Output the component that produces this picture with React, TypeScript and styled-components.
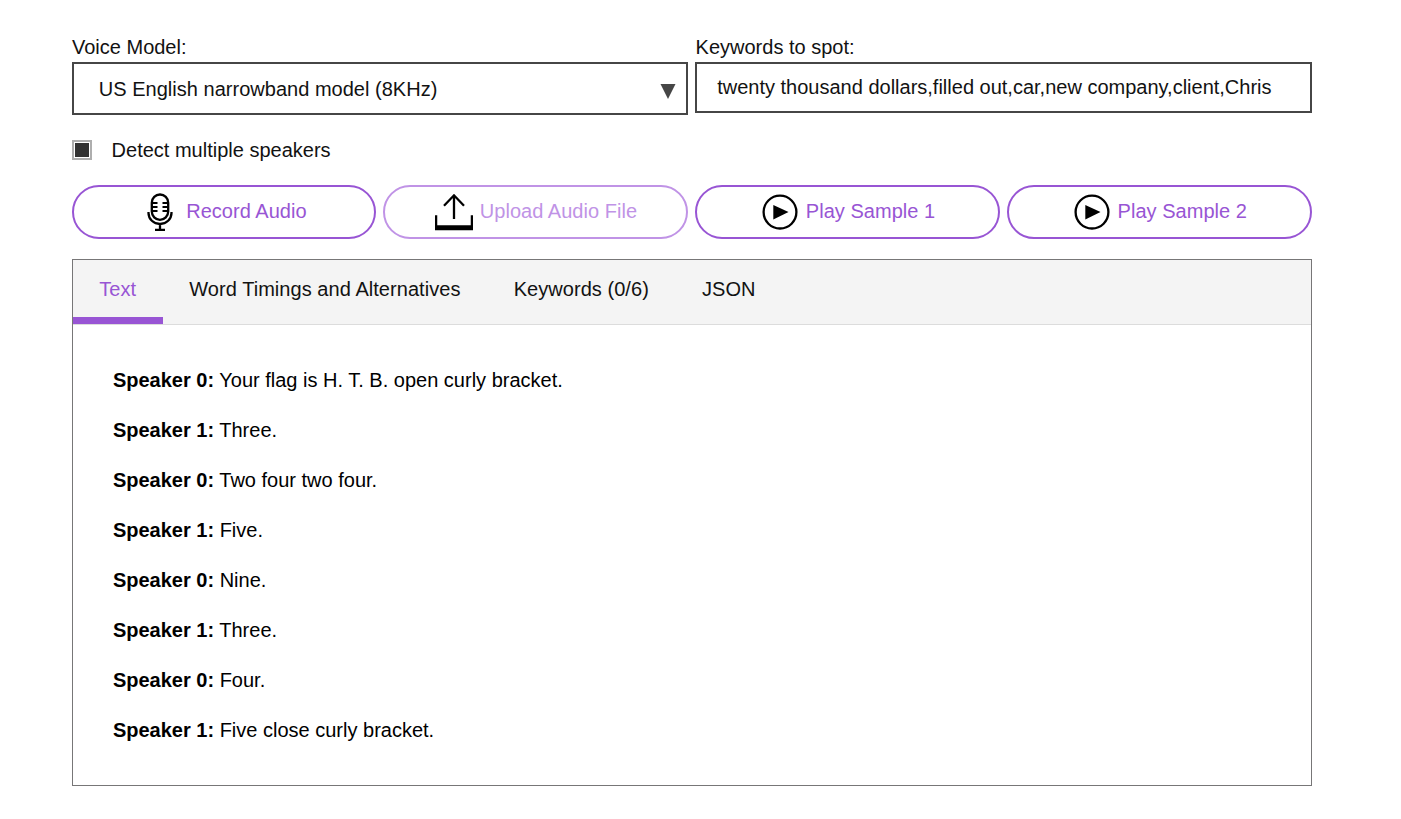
import React from "react";
import styled, { createGlobalStyle } from "styled-components";

const GlobalStyle = createGlobalStyle`
  * { box-sizing: border-box; }
  body {
    margin: 0;
    background: #fff;
    color: #121212;
    font: 20px/24px "Liberation Sans", Arial, sans-serif;
  }
`;

const Page = styled.main`
  width: 1240px;
  margin-left: 71.6px;
  padding-top: 35px;
`;

const Fields = styled.div`
  display: grid;
  grid-template-columns: 1fr 1fr;
  column-gap: 7.2px;
  align-items: start;
  height: 80px;
`;

const FieldLabel = styled.div`
  height: 27px;
  padding-left: 0.4px;
`;

const Select = styled.div`
  display: flex;
  align-items: center;
  justify-content: space-between;
  height: 53px;
  padding: 0 10.5px 0 25.2px;
  border: 2px solid #464646;
  letter-spacing: 0.02px;

  svg { margin-top: 6px; }
`;

const Keywords = styled.div`
  height: 51px;
  padding: 11px 20px 0;
  border: 2px solid #464646;
  white-space: nowrap;
`;

const CheckRow = styled.label`
  display: flex;
  align-items: center;
  gap: 20px;
  height: 24px;
  margin-top: 23px;
`;

const CheckBox = styled.span`
  width: 20px;
  height: 20px;
  border: 2px solid #aeaeae;
  background: #323232;
  box-shadow: inset 0 0 0 1px #fff;
`;

const Actions = styled.div`
  display: grid;
  grid-template-columns: repeat(4, 1fr);
  column-gap: 7.2px;
  margin-top: 23px;
`;

const ActionButton = styled.button<{ $gap: number; $indent: number }>`
  display: flex;
  align-items: center;
  justify-content: center;
  gap: ${(p) => p.$gap}px;
  height: 54px;
  padding: 0 0 0 ${(p) => p.$indent}px;
  border: 2px solid #9855d4;
  border-radius: 27px;
  background: #fff;
  color: #9855d4;
  font: inherit;
  letter-spacing: 0.03px;

  &:disabled {
    border-color: #c093e6;
    color: #c093e6;
  }

  span { padding-bottom: 2px; }
`;

const Panel = styled.section`
  height: 527px;
  margin-top: 20px;
  border: 1px solid #777677;
`;

const Tabs = styled.nav`
  display: flex;
  height: 65px;
  background: #f4f4f4;
  border-bottom: 1px solid #dcdcdc;
`;

const Tab = styled.div<{ $active?: boolean }>`
  height: 64px;
  padding: 17px 26.6px 0;
  color: ${(p) => (p.$active ? "#9855d4" : "#121212")};
  border-bottom: 7px solid ${(p) => (p.$active ? "#9855d4" : "transparent")};
  letter-spacing: 0.05px;
`;

const Transcript = styled.div`
  display: flex;
  flex-direction: column;
  gap: 26px;
  padding: 43px 40.3px 0;
  color: #000;
`;

const Line = styled.div`
  height: 24px;
`;

const MicIcon = () => (
  <svg width="26" height="38" viewBox="0 0 26 38" fill="none" stroke="#000" strokeWidth="2.3">
    <rect x="4.800" y="1.500" width="16.400" height="25.300" rx="8.200" />
    <path d="M1.500 19v1a11.500 11 0 0 0 23 0v-1M13 31v6M8 36.800h10" />
    <path d="M5 10h5.500M5 14h5.500M5 18h5.500M15.500 10h5.500M15.500 14h5.500M15.500 18h5.500" strokeWidth="2" />
  </svg>
);

const UploadIcon = () => (
  <svg width="38" height="38" viewBox="0 0 38 38" fill="none" stroke="#000" strokeWidth="2.300">
    <path d="M19 26V2.300M9 12.700L19 2.300l10 10.400M1.100 22.300v14M36.900 22.300v14" />
    <path d="M0 34.700h38" strokeWidth="5" />
  </svg>
);

const PlayIcon = () => (
  <svg width="36" height="36" viewBox="0 0 36 36" fill="none">
    <circle cx="18" cy="18.100" r="16.400" stroke="#000" strokeWidth="2.300" />
    <path d="M11.300 10.900v14.500L26.500 18.100z" fill="#000" />
  </svg>
);

const tabs = ["Text", "Word Timings and Alternatives", "Keywords (0/6)", "JSON"];

const lines: [number, string][] = [
  [0, "Your flag is H. T. B. open curly bracket."],
  [1, "Three."],
  [0, "Two four two four."],
  [1, "Five."],
  [0, "Nine."],
  [1, "Three."],
  [0, "Four."],
  [1, "Five close curly bracket."],
];

export default function App() {
  return (
    <>
      <GlobalStyle />
      <Page>
        <Fields>
          <div>
            <FieldLabel>Voice Model:</FieldLabel>
            <Select>
              US English narrowband model (8KHz)
              <svg width="16" height="15" viewBox="0 0 16 15">
                <path d="M0.500 0h15L8 15z" fill="#464646" />
              </svg>
            </Select>
          </div>
          <div>
            <FieldLabel>Keywords to spot:</FieldLabel>
            <Keywords>twenty thousand dollars,filled out,car,new company,client,Chris</Keywords>
          </div>
        </Fields>
        <CheckRow>
          <CheckBox />
          Detect multiple speakers
        </CheckRow>
        <Actions>
          <ActionButton $gap={13} $indent={6}><MicIcon /><span>Record Audio</span></ActionButton>
          <ActionButton $gap={6.5} $indent={1} disabled><UploadIcon /><span>Upload Audio File</span></ActionButton>
          <ActionButton $gap={8} $indent={2}><PlayIcon /><span>Play Sample 1</span></ActionButton>
          <ActionButton $gap={8} $indent={2}><PlayIcon /><span>Play Sample 2</span></ActionButton>
        </Actions>
        <Panel>
          <Tabs>
            {tabs.map((t, i) => (
              <Tab key={t} $active={i === 0}>{t}</Tab>
            ))}
          </Tabs>
          <Transcript>
            {lines.map(([speaker, text], i) => (
              <Line key={i}><b>Speaker {speaker}:</b> {text}</Line>
            ))}
          </Transcript>
        </Panel>
      </Page>
    </>
  );
}
